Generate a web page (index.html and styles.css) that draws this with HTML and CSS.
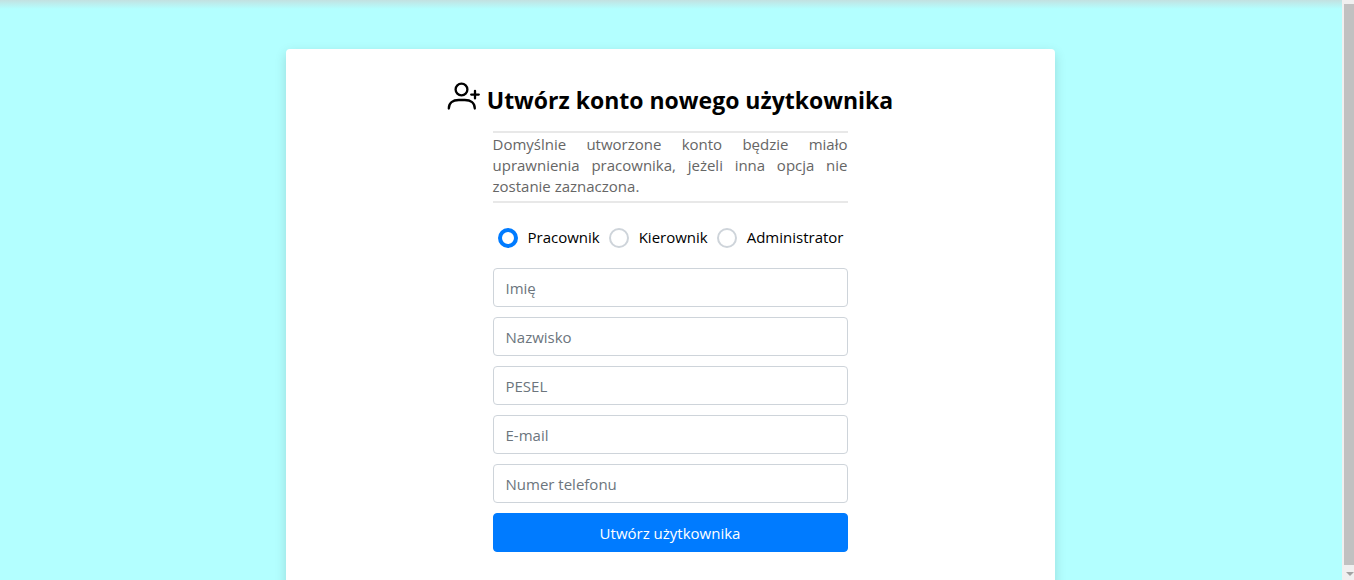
FILE: index.html
```html
<!DOCTYPE html>
<html lang="pl">
<head>
<meta charset="utf-8">
<title>Utwórz konto nowego użytkownika</title>
<link rel="stylesheet" href="styles.css">
</head>
<body>
<div class="viewport">
  <main class="page">
    <section class="card">
      <h1 class="title">
        <svg class="title-icon" viewBox="0 0 33 30" aria-hidden="true">
          <circle cx="14.500" cy="8.500" r="5.900"/>
          <path d="M1.800 27.500c0-5.500 4-8.500 10-8.500h6c6 0 10 3 10 8.500"/>
          <path d="M28 9.800v7.600M24.200 13.600h7.600"/>
        </svg>
        <span>Utwórz konto nowego użytkownika</span>
      </h1>
      <form class="form">
        <p class="note">Domyślnie utworzone konto będzie miało uprawnienia pracownika, jeżeli inna opcja nie zostanie zaznaczona.</p>
        <div class="roles">
          <label class="role"><input class="radio" type="radio" name="role" checked>Pracownik</label>
          <label class="role"><input class="radio" type="radio" name="role">Kierownik</label>
          <label class="role"><input class="radio" type="radio" name="role">Administrator</label>
        </div>
        <input class="field" type="text" placeholder="Imię" aria-label="Imię">
        <input class="field" type="text" placeholder="Nazwisko" aria-label="Nazwisko">
        <input class="field" type="text" placeholder="PESEL" aria-label="PESEL">
        <input class="field" type="email" placeholder="E-mail" aria-label="E-mail">
        <input class="field" type="tel" placeholder="Numer telefonu" aria-label="Numer telefonu">
        <button class="submit" type="submit">Utwórz użytkownika</button>
      </form>
    </section>
  </main>
  <div class="scrollbar" aria-hidden="true">
    <div class="thumb"></div>
    <svg class="arrow" viewBox="0 0 8 4"><path d="M0 0h8L4 4z"/></svg>
  </div>
</div>
</body>
</html>
```
FILE: styles.css
```css
* { box-sizing: border-box; }
body {
  margin: 0;
  background: #b3ffff;
  color: #000;
  font: 15px/21px "Segoe UI", "Open Sans", "Noto Sans", sans-serif;
}
.viewport {
  display: flex;
  height: 100vh;
  overflow: hidden;
}
.page {
  flex: 1;
  display: flex;
  justify-content: center;
  align-items: flex-start;
  padding: 49px 17px 0 15px;
  background: linear-gradient(rgba(196, 222, 222, .9), rgba(196, 222, 222, 0)) top / 100% 9px no-repeat;
}
.card {
  width: 100%;
  max-width: 769px;
  padding: 32px 24px 64px;
  background: #fff;
  border-radius: 4px;
  box-shadow: 0 4px 12px rgba(0, 0, 0, .15);
}
.title {
  display: flex;
  justify-content: center;
  align-items: flex-start;
  gap: 7px;
  margin: 0 0 12px;
  font-size: 23px;
  line-height: 38px;
  font-weight: 700;
}
.title-icon {
  width: 33px;
  height: 30px;
  fill: none;
  stroke: #000;
  stroke-width: 2.3;
  stroke-linecap: round;
}
.form {
  display: flex;
  flex-direction: column;
  gap: 10px;
  max-width: 355px;
  margin: 0 auto;
}
.note {
  margin: 0;
  padding: 1px 0 4px;
  border-top: 2px solid #e8e8e8;
  border-bottom: 2px solid #e8e8e8;
  color: #666;
  text-align: justify;
}
.roles {
  display: flex;
  justify-content: space-between;
  padding: 14px 4px 10px 5px;
}
.role {
  display: flex;
  align-items: center;
  gap: 10px;
}
.radio {
  appearance: none;
  width: 20px;
  height: 20px;
  margin: 0;
  border: 2px solid #ced4da;
  border-radius: 50%;
  background: #fff;
}
.radio:checked { border: 4px solid #007bff; }
.field,
.submit {
  width: 100%;
  height: 39px;
  padding: 0 12px;
  border: 1px solid #ced4da;
  border-radius: 4px;
  background: #fff;
  font: inherit;
}
.field::placeholder { color: #6c757d; opacity: 1; }
.submit {
  padding-top: 2px;
  border-color: #007bff;
  background: #007bff;
  color: #fff;
}
.scrollbar {
  display: flex;
  flex-direction: column;
  align-items: flex-end;
  width: 12px;
  padding: 4px 0;
  background: #f0f0f0;
}
.thumb {
  flex: 1;
  width: 10px;
  background: #c1c1c1;
}
.arrow {
  width: 8px;
  height: 4px;
  margin-top: 7px;
  fill: #a3a3a3;
}
```
